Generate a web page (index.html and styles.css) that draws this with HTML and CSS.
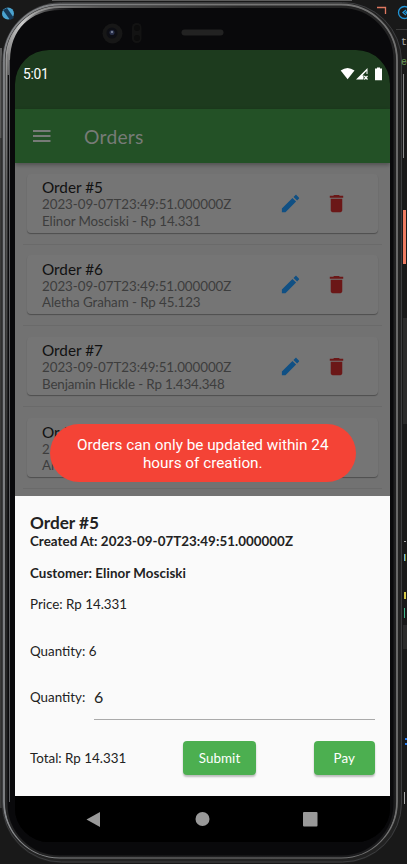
FILE: index.html
```html
<!DOCTYPE html>
<html lang="en">
<head>
<meta charset="utf-8">
<title>Orders</title>
<link rel="stylesheet" href="styles.css">
</head>
<body>
<svg class="frame" width="407" height="864" viewBox="0 0 407 864" fill="none" aria-hidden="true">
  <defs>
    <linearGradient id="glint" x1="0" y1="0" x2="1" y2="1">
      <stop offset="0" stop-color="#aaa"/><stop offset=".12" stop-color="#555"/><stop offset=".3" stop-color="#262626"/><stop offset="1" stop-color="#1b1b1d"/>
    </linearGradient>
    <linearGradient id="rim" x1="0" y1="0" x2="1" y2="0">
      <stop offset="0" stop-color="#85878a"/><stop offset=".5" stop-color="#777"/><stop offset="1" stop-color="#707070"/>
    </linearGradient>
    <linearGradient id="corner" x1="8" y1="75" x2="75" y2="10" gradientUnits="userSpaceOnUse">
      <stop offset="0" stop-color="#666"/><stop offset=".5" stop-color="#ccc"/><stop offset="1" stop-color="#777" stop-opacity="0"/>
    </linearGradient>
  </defs>
  <path fill="#191919" d="M0 0h407v864H0z"/>
  <path fill="#5b5b5b" d="M52 0h300v1H52zM0 48h2v90H0z"/>
  <path fill="#3a3a3a" d="M0 138h2v670H0zM396 29h11v1h-11zM396 62h11v1h-11z"/>
  <circle cx="8" cy="13.500" r="6" fill="#4aa3d0"/>
  <path fill="#163a58" d="M3 10l4-2 7 10-4 2z"/>
  <circle cx="404.500" cy="12.500" r="6" stroke="#2196d8" stroke-width="1.300"/>
  <path stroke="#2196d8" stroke-width="1.300" d="M406 10l-3 2.500 3 2.500M409 10l-3 2.500 3 2.500"/>
  <path stroke="#8a8a8a" d="M403.500 74v84"/>
  <path fill="#2b2b2b" d="M403 318h4v106h-4zM403 625h4v24h-4z"/>
  <path fill="#6ab8e8" d="M404 554h1v7h-1z"/>
  <path fill="#848a20" d="M405 554h1v7h-1z"/>
  <path fill="#d5c94b" d="M404 592h2v7h-2z"/>
  <path fill="#45b58b" d="M404 608h1v10h-1z"/>
  <path fill="#aaa" d="M404 541h2v1h-2zM404 792h1v12h-1z"/>
  <path fill="#2b7ef0" d="M405 738h2v2h-2zM405 743h2v2h-2z"/>
  <rect x="1.500" y="2" width="400.500" height="861" rx="60" fill="#222"/>
  <path fill="#ef7d63" d="M403 210h3v54h-3z"/>
  <rect x="2.500" y="2.500" width="399" height="859.500" rx="59" stroke="#3c3d3f"/>
  <rect x="4" y="4.500" width="393" height="853" rx="56" stroke="url(#rim)" stroke-width="1.800"/>
  <rect x="6.500" y="7" width="388" height="849.500" rx="53" fill="#09090b" stroke="url(#glint)" stroke-width="2"/>
  <path d="M8.500 75V60C9 29 29 9 60 8.500H80" stroke="url(#corner)" stroke-width="3"/>
  <path stroke="#5b5c60" d="M9.500 60V802"/>
  <path stroke="#e07860" stroke-width="1.300" d="M377 7.500h8.500V14"/>
  <circle cx="112.500" cy="33.500" r="10" fill="#171717"/>
  <circle cx="112" cy="33" r="5.500" fill="#0d0e14"/>
  <circle cx="112" cy="32.500" r="2.500" fill="#29304b"/>
  <circle cx="112" cy="32" r="1" fill="#8790a5"/>
  <rect x="132" y="23" width="9.500" height="20" rx="4.500" fill="#131313"/>
  <circle cx="137" cy="28" r="3" fill="#0c0c0c"/><circle cx="137" cy="38" r="3" fill="#0c0c0c"/>
  <rect x="181.500" y="29.500" width="42" height="6" rx="3" fill="#222"/>
</svg>
<div class="editor" aria-hidden="true"><span class="plain">t</span><span class="green">e</span></div>
<svg class="defs" aria-hidden="true">
  <symbol id="edit" viewBox="0 0 24 24"><path d="M3 17.250V21h3.750L17.810 9.940l-3.750-3.750L3 17.250zM20.710 7.040c.39-.39.39-1.020 0-1.410l-2.340-2.340c-.39-.39-1.020-.39-1.410 0l-1.830 1.830 3.750 3.750 1.830-1.830z"/></symbol>
  <symbol id="delete" viewBox="0 0 24 24"><path d="M6 19c0 1.100.9 2 2 2h8c1.100 0 2-.9 2-2V7H6v12zM19 4h-3.500l-1-1h-5l-1 1H5v2h14V4z"/></symbol>
</svg>
<main class="screen">
  <header class="status">
    <span>5:01</span>
    <svg width="43" height="14" viewBox="0 0 43 14" fill="#fff">
      <path d="M.7 3.500Q7.500-1.500 14.500 3.500L7.600 12.200z"/>
      <path d="M16 12.500L27.500 1v6h-4v5.500z"/><path fill="#1d3b1e" d="M22.300 8.500L26.500 4v3.500h-3v1z"/>
      <path stroke="#fff" stroke-width="1.200" d="M24.300 9l3.200 3.500M27.500 9l-3.200 3.500"/>
      <path d="M35 1.500h2V.5h3v1h2v11.700h-7z"/>
    </svg>
  </header>
  <div class="appbar">
    <svg width="18" height="12" viewBox="0 0 18 12"><path fill="#777b77" d="M0 0h17.500v2H0zM0 5h17.500v2H0zM0 10h17.500v2H0z"/></svg>
    <h1>Orders</h1>
  </div>
  <section class="list">
    <article class="order">
      <div class="card"><div class="info"><h2>Order #5</h2><p>2023-09-07T23:49:51.000000Z</p><p class="who">Elinor Mosciski - Rp 14.331</p></div><svg class="icon edit"><use href="#edit"/></svg><svg class="icon delete"><use href="#delete"/></svg></div>
    </article>
    <article class="order">
      <div class="card"><div class="info"><h2>Order #6</h2><p>2023-09-07T23:49:51.000000Z</p><p class="who">Aletha Graham - Rp 45.123</p></div><svg class="icon edit"><use href="#edit"/></svg><svg class="icon delete"><use href="#delete"/></svg></div>
    </article>
    <article class="order">
      <div class="card"><div class="info"><h2>Order #7</h2><p>2023-09-07T23:49:51.000000Z</p><p class="who long">Benjamin Hickle - Rp 1.434.348</p></div><svg class="icon edit"><use href="#edit"/></svg><svg class="icon delete"><use href="#delete"/></svg></div>
    </article>
    <article class="order">
      <div class="card"><div class="info"><h2>Ord</h2><p>2</p><p class="who">Al</p></div></div>
    </article>
  </section>
  <section class="sheet">
    <h2>Order #5</h2>
    <p class="created">Created At: 2023-09-07T23:49:51.000000Z</p>
    <p class="customer">Customer: Elinor Mosciski</p>
    <p class="price">Price: Rp 14.331</p>
    <p class="quantity">Quantity: 6</p>
    <div class="field"><span>Quantity:</span><div class="input">6</div></div>
    <div class="actions"><span>Total: Rp 14.331</span><button class="submit">Submit</button><button class="pay">Pay</button></div>
  </section>
  <nav class="nav">
    <svg width="375" height="46" viewBox="0 0 375 46" fill="#999"><path d="M71.500 23.500L85 16v15z"/><circle cx="187.500" cy="23" r="7"/><rect x="288" y="16" width="14.500" height="14.500" rx="1"/></svg>
  </nav>
</main>
<div class="toast">Orders can only be updated within 24<br>hours of creation.</div>
</body>
</html>
```

FILE: styles.css
```css
* { box-sizing: border-box; }
body { margin: 0; width: 407px; height: 864px; padding: 50px 17px 22px 15px; overflow: hidden; background: #191919; font-family: Lato, sans-serif; position: relative; }
h1, h2, p { margin: 0; font-weight: 400; }
.frame { position: absolute; left: 0; top: 0; }
.defs { display: none; }
.editor { position: absolute; left: 401px; top: 33px; width: 6px; font: 10px/20px "Liberation Mono", monospace; }
.editor span { display: block; }
.plain { color: #aaa; }
.green { color: #6a9955; }
.screen { position: relative; width: 375px; height: 792px; display: flex; flex-direction: column; overflow: hidden; border-radius: 34px; background: #000; }
.status { height: 59px; flex: none; background: #1d3b1e; color: #fff; display: flex; justify-content: space-between; align-items: flex-start; padding: 17px 7px 0 8px; font: 13.8px/15px Roboto, sans-serif; letter-spacing: -.3px; }
.appbar { height: 54px; flex: none; background: #235126; color: #777b77; display: flex; align-items: center; padding-left: 18px; gap: 33px; box-shadow: 0 2px 4px rgba(0,0,0,.3); position: relative; }
h1 { font-size: 19.3px; line-height: 24px; letter-spacing: .25px; padding-top: 2px; }
.list { height: 333px; flex: none; overflow: hidden; padding: 11px 8px 0; background: #727272; }
.order { height: 81.3px; border-bottom: 1px solid #6a6a6a; padding: 0 4px; }
.order + .order { padding-top: 10.700px; }
.order:first-child { height: 70.800px; }
.card { height: 58.500px; background: #757575; border-radius: 4px; box-shadow: 0 1px 1px rgba(0,0,0,.32); display: flex; align-items: center; padding: 0 30px 0 15px; }
.info { flex: 1; color: #3d3d3d; font-size: 13.370px; line-height: 16.300px; letter-spacing: -.05px; padding-top: 2px; }
.info h2 { color: #111; font-size: 15.300px; line-height: 18px; margin-top: -1px; letter-spacing: 0; }
.who { letter-spacing: -.08px; }
.long { letter-spacing: -.12px; }
.icon { width: 23px; height: 23px; flex: none; }
.edit { fill: #105084; margin-right: 23px; }
.delete { fill: #6b1717; }
.sheet { height: 300px; flex: none; background: #fafafa; color: #222; padding: 16px 15px 0; font-size: 13.370px; line-height: 18px; letter-spacing: 0; }
.sheet h2 { font-size: 17.200px; line-height: 22px; font-weight: 700; }
.created, .customer { font-weight: 700; }
.created { margin-top: -2px; letter-spacing: .04px; }
.customer { margin-top: 14px; letter-spacing: .06px; }
.price { margin-top: 13px; }
.quantity { margin-top: 29px; }
.field { display: flex; align-items: center; justify-content: space-between; height: 46px; margin-top: 14px; }
.input { width: 281px; height: 46px; border-bottom: 1px solid #aaa; font-size: 16px; line-height: 46px; }
.actions { display: flex; align-items: center; height: 34px; margin-top: 21px; }
.actions span { width: 153px; }
button { height: 34px; padding: 0; border: 0; border-radius: 4px; background: #4caf50; color: #fff; font: 13.370px Lato, sans-serif; letter-spacing: .1px; box-shadow: 0 2px 2px rgba(0,0,0,.25); }
.submit { width: 73px; }
.pay { width: 61.500px; margin-left: auto; }
.nav { height: 46px; background: #000; }
.toast { position: absolute; left: 50px; top: 424px; width: 305.500px; height: 58px; border-radius: 29px; background: #f44336; color: #fff; text-align: center; font: 15.300px/18px Roboto, sans-serif; padding: 12px 0 0; }
```
